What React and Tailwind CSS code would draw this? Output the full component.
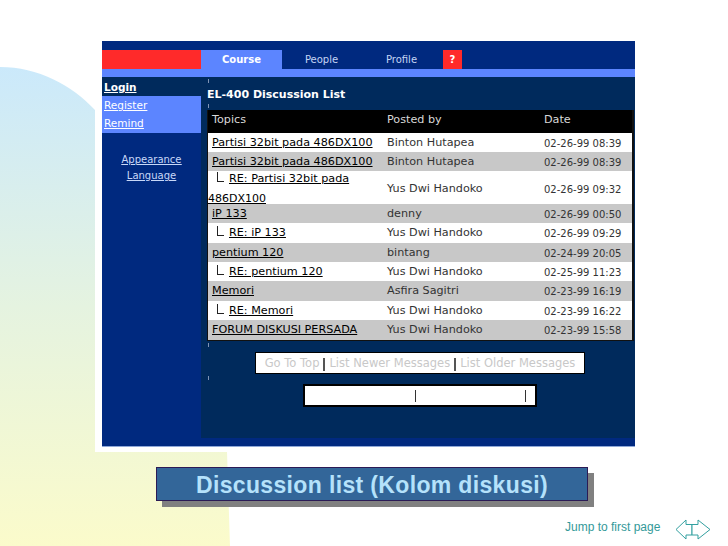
const rows = [
  { topic: "Partisi 32bit pada 486DX100", by: "Binton Hutapea", date: "02-26-99 08:39", h: "h-[19px] pt-[2px]" },
  { topic: "Partisi 32bit pada 486DX100", by: "Binton Hutapea", date: "02-26-99 08:39", h: "h-[19px] pt-[2px]", gray: true },
  { topic: "RE: Partisi 32bit pada", wrap: "486DX100", by: "Yus Dwi Handoko", date: "02-26-99 09:32", h: "h-[33px]", reply: true },
  { topic: "iP 133", by: "denny", date: "02-26-99 00:50", h: "h-[19px] pt-[2px]", gray: true },
  { topic: "RE: iP 133", by: "Yus Dwi Handoko", date: "02-26-99 09:29", h: "h-[20px]", reply: true },
  { topic: "pentium 120", by: "bintang", date: "02-24-99 20:05", h: "h-[19px] pt-[2px]", gray: true },
  { topic: "RE: pentium 120", by: "Yus Dwi Handoko", date: "02-25-99 11:23", h: "h-[19px] pt-px", reply: true },
  { topic: "Memori", by: "Asfira Sagitri", date: "02-23-99 16:19", h: "h-[20px] pt-px", gray: true },
  { topic: "RE: Memori", by: "Yus Dwi Handoko", date: "02-23-99 16:22", h: "h-[19px] pt-px", reply: true },
  { topic: "FORUM DISKUSI PERSADA", by: "Yus Dwi Handoko", date: "02-23-99 15:58", h: "h-[20px] pt-px", gray: true },
];

const Tick = ({ className }) => <div className={`w-px h-[4px] bg-[#7f93b5] ml-px ${className}`} />;

const Topic = ({ row }) => {
  if (!row.reply) return <a className="underline pl-1 text-black">{row.topic}</a>;
  return (
    <div className="flex flex-col">
      <div className="flex items-center pl-[9px]">
        <span className="w-[7px] h-[10px] border-l border-b border-[#222] mr-[5px] -mt-1" />
        <a className="underline text-black">{row.topic}</a>
      </div>
      {row.wrap && <a className="underline text-black text-[11px] pl-0 mt-[3px]">{row.wrap}</a>}
    </div>
  );
};

export default function App() {
  return (
    <div className="relative w-[728px] h-[546px] overflow-hidden bg-white pt-[41px] pl-[102px] font-['DejaVu_Sans',sans-serif]">
      {/* slide background shape */}
      <svg className="absolute left-0 top-0" width="728" height="546">
        <defs>
          <linearGradient id="bg" x1="0" y1="0" x2="0" y2="1">
            <stop offset="0" stopColor="#cbe9fb" />
            <stop offset="0.5" stopColor="#e5f3e0" />
            <stop offset="1" stopColor="#fbfbcb" />
          </linearGradient>
        </defs>
        <path d="M0 67C38 67 72 85 95 110L95 452L227 452L230 546L0 546Z" fill="url(#bg)" />
      </svg>

      <div className="relative w-[533px] h-[406px] bg-[#00297f] border-b border-[#8fa8d8] pt-[9px]">
        {/* nav */}
        <div className="flex h-[19px] text-[10px] text-[#c4d4f4]">
          <div className="w-[99px] bg-[#ff2a2a]" />
          <div className="w-[81px] bg-[#5c85ff] text-white font-bold flex items-center justify-center">Course</div>
          <div className="w-[79px] flex items-center justify-center">People</div>
          <div className="w-[81px] flex items-center justify-center">Profile</div>
          <div className="w-[19px] ml-px bg-[#ff2a2a] text-white font-bold flex items-center justify-center">?</div>
        </div>
        <div className="h-[8px] bg-[#5c85ff]" />

        <div className="flex h-[361px]">
          {/* sidebar */}
          <div className="w-[99px] text-[10.5px] text-white">
            <div className="h-[19px] bg-[#002a5c] pl-[2px] pt-[2px] flex items-center font-bold underline">Login</div>
            <div className="h-[37px] bg-[#5c85ff] pl-[2px] pt-px flex flex-col justify-around underline">
              <a>Register</a>
              <a>Remind</a>
            </div>
            <div className="mt-[19px] flex flex-col items-center gap-[1px] text-[10px] text-[#c8d8f8] underline leading-[15px]">
              <a>Appearance</a>
              <a>Language</a>
            </div>
          </div>

          {/* content */}
          <div className="w-[434px] bg-[#002a5c] pl-[6px] pt-[2px]">
            <Tick />
            <div className="text-white font-bold text-[11px] leading-[16px] mt-[4px] mb-[1px]">EL-400 Discussion List</div>
            <Tick />
            <div className="w-[427px] mt-[2px] bg-black border-r-2 border-b border-l border-[#111] text-[11.2px]">
              <div className="h-[23px] pb-[2px] grid grid-cols-[179px_157px_1fr] items-center text-[#d8d8d8]">
                <div className="pl-1">Topics</div>
                <div>Posted by</div>
                <div>Date</div>
              </div>
              {rows.map((row, i) => (
                <div key={i} className={`${row.h} ${row.gray ? "bg-[#c8c8c8]" : "bg-white"} grid grid-cols-[179px_157px_1fr] items-center text-[#333]`}>
                  <Topic row={row} />
                  <div>{row.by}</div>
                  <div className="text-[10px]">{row.date}</div>
                </div>
              ))}
            </div>
            <Tick className="mt-[2px]" />
            <div className="w-[330px] h-[22px] ml-[48px] mt-[5px] pt-[2px] bg-white border border-black flex items-center justify-center text-[11.5px] text-[#c8c8c8] gap-[4px]">
              <span>Go To Top</span>
              <span className="w-[2px] h-[13px] bg-[#555]" />
              <span>List Newer Messages</span>
              <span className="w-[2px] h-[13px] bg-[#555]" />
              <span>List Older Messages</span>
            </div>
            <Tick className="mt-[2px]" />
            <div className="w-[234px] h-[23px] ml-[96px] mt-[4px] bg-white border-2 border-black flex items-center">
              <span className="w-px h-[12px] bg-[#333] ml-[110px]" />
              <span className="w-px h-[12px] bg-[#333] ml-[109px]" />
            </div>
          </div>
        </div>
        <div className="h-[9px]" />
      </div>

      {/* caption */}
      <div className="relative w-[432px] h-[34px] ml-[54px] mt-[20px] pt-[2px] bg-[#336699] border border-[#2b1b55] shadow-[6px_6px_0_#808080] flex items-center justify-center font-['Liberation_Sans',sans-serif] font-bold text-[23px] tracking-[0.35px] text-[#b5e2fb]">
        Discussion list (Kolom diskusi)
      </div>

      {/* footer */}
      <div className="relative flex items-start mt-[18px] ml-[463px] font-['Liberation_Sans',sans-serif] text-[12px] leading-[16px] text-[#339999]">
        <span>Jump to first page</span>
        <svg className="ml-[15px]" width="36" height="21" viewBox="0 0 36 21" fill="white" stroke="#33a0a0" strokeWidth="1">
          <path d="M1 10.5L11 1V5.5H17V16H11V20Z" />
          <path d="M35 10.5L23 1V5.5H17V16H23V20Z" />
        </svg>
      </div>
    </div>
  );
}
